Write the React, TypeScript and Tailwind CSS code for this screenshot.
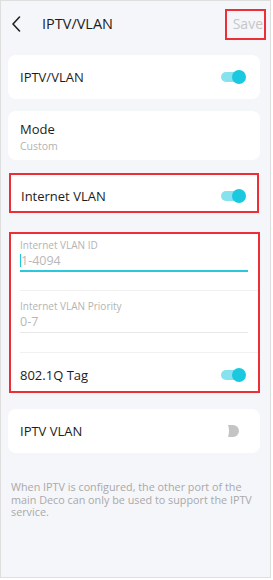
import React from "react";

function ToggleOn() {
  return (
    <div className="relative w-[25px] h-[14px] flex items-center">
      <div className="w-[22px] h-[10px] rounded-full bg-[#86e2ee]" />
      <div className="absolute right-0 top-0 w-[14px] h-[14px] rounded-full bg-[#1ac9df]" />
    </div>
  );
}

function ToggleOff() {
  return (
    <svg width="11" height="12" viewBox="0 0 11 12">
      <path d="M0 0 H5 A6 6 0 0 1 5 12 H0 Q2 6 0 0 Z" fill="#c4c4c4" />
    </svg>
  );
}

export default function App() {
  return (
    <div
      className="w-[273px] h-[580px] bg-white"
      style={{ fontFamily: "'Open Sans', 'Noto Sans', sans-serif" }}
    >
      <div className="w-[271px] h-[578px] border border-[#dedede] bg-[#f5f6fa] flex flex-col text-[#1c1c1c]">
        {/* Header */}
        <div className="h-[45px] flex items-center relative">
          <svg
            className="ml-[10px]"
            width="10"
            height="16"
            viewBox="0 0 10 16"
            fill="none"
          >
            <path d="M8.5 1 L2 8 L8.5 15" stroke="#222" strokeWidth="1.6" strokeLinecap="round" strokeLinejoin="round" />
          </svg>
          <div className="ml-[21px] text-[14.5px] leading-[18px]">IPTV/VLAN</div>
          <div className="ml-auto mr-[4px] mt-[1px] w-[41px] h-[31px] border-2 border-[#ee2e36] flex items-center justify-end pr-[1px]">
            <span className="text-[14px] leading-[16px] text-[#c6c6c6]">Save</span>
          </div>
        </div>

        <div className="flex flex-col pl-[7px] pr-[10px] mt-[9px]">
          {/* Card 1 */}
          <div className="h-[44px] bg-white rounded-[8px] flex items-center pl-[12px] pr-[14px]">
            <span className="text-[13px] leading-[16px]">IPTV/VLAN</span>
            <div className="ml-auto">
              <ToggleOn />
            </div>
          </div>

          {/* Card 2 */}
          <div className="h-[49px] mt-[12px] bg-white rounded-[8px] pl-[12px] pt-[10px]">
            <div className="text-[13px] leading-[16px]">Mode</div>
            <div className="text-[10.5px] leading-[13px] mt-[3px] text-[#b3b3b3]">Custom</div>
          </div>

          {/* Card 3 */}
          <div className="h-[40px] mt-[13px] ml-[1px] mr-[1px] bg-white border-2 border-[#ee2e36] flex items-center pl-[10px] pr-[11px] pt-[5px]">
            <span className="text-[13px] leading-[16px]">Internet VLAN</span>
            <div className="ml-auto">
              <ToggleOn />
            </div>
          </div>

          {/* Card 4 */}
          <div className="h-[161px] mt-[19px] ml-[1px] bg-white border-2 border-[#ee2e36] flex flex-col">
            <div className="ml-[9px] h-[57px] border-b border-[#f1f1f1] pr-[10px] pt-[5px]">
              <div className="text-[10px] leading-[12px] text-[#b4b4b4]">Internet VLAN ID</div>
              <div className="h-[19px] flex items-center">
                <div className="w-[1px] h-[13px] bg-[#1ac9df]" />
                <span className="text-[12.5px] leading-[16px] text-[#b8b8b8]">1-4094</span>
              </div>
              <div className="h-[1.5px] bg-[#2cc7db]" />
            </div>
            <div className="ml-[9px] h-[62px] border-b border-[#f1f1f1] pr-[10px] pt-[9px]">
              <div className="text-[10px] leading-[12px] text-[#b4b4b4]">Internet VLAN Priority</div>
              <div className="h-[20px] flex items-center">
                <span className="text-[12.5px] leading-[16px] text-[#b8b8b8]">0-7</span>
              </div>
              <div className="h-[1px] bg-[#e8e8e8]" />
            </div>
            <div className="flex-1 flex items-center pl-[9px] pr-[12px] pt-[5px]">
              <span className="text-[13px] leading-[16px]">802.1Q Tag</span>
              <div className="ml-auto">
                <ToggleOn />
              </div>
            </div>
          </div>

          {/* Card 5 */}
          <div className="h-[44px] mt-[16px] bg-white rounded-[8px] flex items-center pl-[12px] pr-[21px]">
            <span className="text-[13px] leading-[16px]">IPTV VLAN</span>
            <div className="ml-auto flex items-center">
              <ToggleOff />
            </div>
          </div>
        </div>

        {/* Footer */}
        <div className="mt-[28px] pl-[10px] pr-[14px] text-[10.8px] leading-[12.5px] text-[#a9a9a9]">
          When IPTV is configured, the other port of the main Deco can only be used to support the IPTV service.
        </div>
      </div>
    </div>
  );
}
